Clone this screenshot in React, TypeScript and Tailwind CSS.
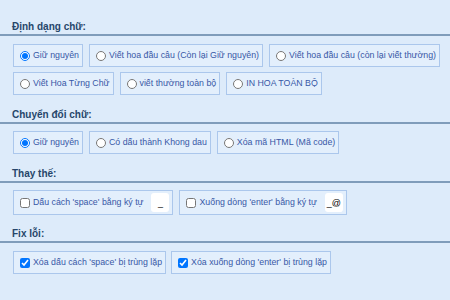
import React, { useState } from 'react';

type Opt = { id: string; label: string };

const caseRows: Opt[][] = [
  [
    { id: 'keep', label: 'Giữ nguyên' },
    { id: 'sentence', label: 'Viết hoa đầu câu (Còn lại Giữ nguyên)' },
    { id: 'sentenceLower', label: 'Viết hoa đầu câu (còn lại viết thường)' },
  ],
  [
    { id: 'title', label: 'Viết Hoa Từng Chữ' },
    { id: 'lower', label: 'viết thường toàn bộ' },
    { id: 'upper', label: 'IN HOA TOÀN BỘ' },
  ],
];

const convertOpts: Opt[] = [
  { id: 'keep', label: 'Giữ nguyên' },
  { id: 'nodiacritic', label: 'Có dấu thành Khong dau' },
  { id: 'html', label: 'Xóa mã HTML (Mã code)' },
];

const Heading: React.FC<{ title: string; className?: string }> = ({ title, className }) => (
  <div className={`pl-[12px] h-[16px] leading-[14px] border-b-2 border-[#7f9cba] text-[10px] font-bold text-[#26466a] ${className ?? ''}`}>
    {title}
  </div>
);

const Box: React.FC<{ children: React.ReactNode; className?: string }> = ({ children, className }) => (
  <label className={`flex items-center gap-[3px] h-[23px] pl-[6px] pr-[3px] border border-[#abc7ec] bg-[#e3effc] text-[8.8px] text-[#3858a6] whitespace-nowrap cursor-pointer ${className ?? ''}`}>
    {children}
  </label>
);

export default function App() {
  const [textCase, setTextCase] = useState('keep');
  const [convert, setConvert] = useState('keep');
  const [replaceSpace, setReplaceSpace] = useState(false);
  const [replaceEnter, setReplaceEnter] = useState(false);
  const [spaceChar, setSpaceChar] = useState('_');
  const [enterChar, setEnterChar] = useState('_@');
  const [fixSpace, setFixSpace] = useState(true);
  const [fixEnter, setFixEnter] = useState(true);

  return (
    <div className="w-[450px] h-[300px] bg-[#ddebfa] pt-[20px] overflow-hidden" style={{ fontFamily: '"Liberation Sans", Arial, sans-serif' }}>
      <Heading title="Định dạng chữ:" />
      <div className="mt-[8px] pl-[13px] flex flex-col gap-[5px]">
        {caseRows.map((row, i) => (
          <div key={i} className="flex gap-[6px]">
            {row.map(o => (
              <Box key={o.id}>
                <input type="radio" name="case" checked={textCase === o.id} onChange={() => setTextCase(o.id)} className="m-0 w-[10px] h-[10px]" />
                {o.label}
              </Box>
            ))}
          </div>
        ))}
      </div>

      <Heading title="Chuyển đổi chữ:" className="mt-[13px]" />
      <div className="mt-[7px] pl-[13px] flex gap-[6px]">
        {convertOpts.map(o => (
          <Box key={o.id}>
            <input type="radio" name="convert" checked={convert === o.id} onChange={() => setConvert(o.id)} className="m-0 w-[10px] h-[10px]" />
            {o.label}
          </Box>
        ))}
      </div>

      <Heading title="Thay thế:" className="mt-[13px]" />
      <div className="mt-[7px] pl-[13px] flex gap-[6px]">
        <Box className="h-[25px]">
          <input type="checkbox" checked={replaceSpace} onChange={e => setReplaceSpace(e.target.checked)} className="m-0 w-[10px] h-[10px]" />
          <span className="mr-[5px]">Dấu cách 'space' bằng ký tự</span>
          <input value={spaceChar} onChange={e => setSpaceChar(e.target.value)} className="w-[18px] h-[19px] rounded-[3px] bg-white text-[9px] text-black text-center outline-none" />
        </Box>
        <Box className="h-[25px]">
          <input type="checkbox" checked={replaceEnter} onChange={e => setReplaceEnter(e.target.checked)} className="m-0 w-[10px] h-[10px]" />
          <span className="mr-[5px]">Xuống dòng 'enter' bằng ký tự</span>
          <input value={enterChar} onChange={e => setEnterChar(e.target.value)} className="w-[18px] h-[19px] rounded-[3px] bg-white text-[9px] text-black text-center outline-none" />
        </Box>
      </div>

      <Heading title="Fix lỗi:" className="mt-[12px]" />
      <div className="mt-[8px] pl-[13px] flex gap-[5px]">
        <Box>
          <input type="checkbox" checked={fixSpace} onChange={e => setFixSpace(e.target.checked)} className="m-0 w-[10px] h-[10px]" />
          Xóa dấu cách 'space' bị trùng lặp
        </Box>
        <Box>
          <input type="checkbox" checked={fixEnter} onChange={e => setFixEnter(e.target.checked)} className="m-0 w-[10px] h-[10px]" />
          Xóa xuống dòng 'enter' bị trùng lặp
        </Box>
      </div>
    </div>
  );
}
